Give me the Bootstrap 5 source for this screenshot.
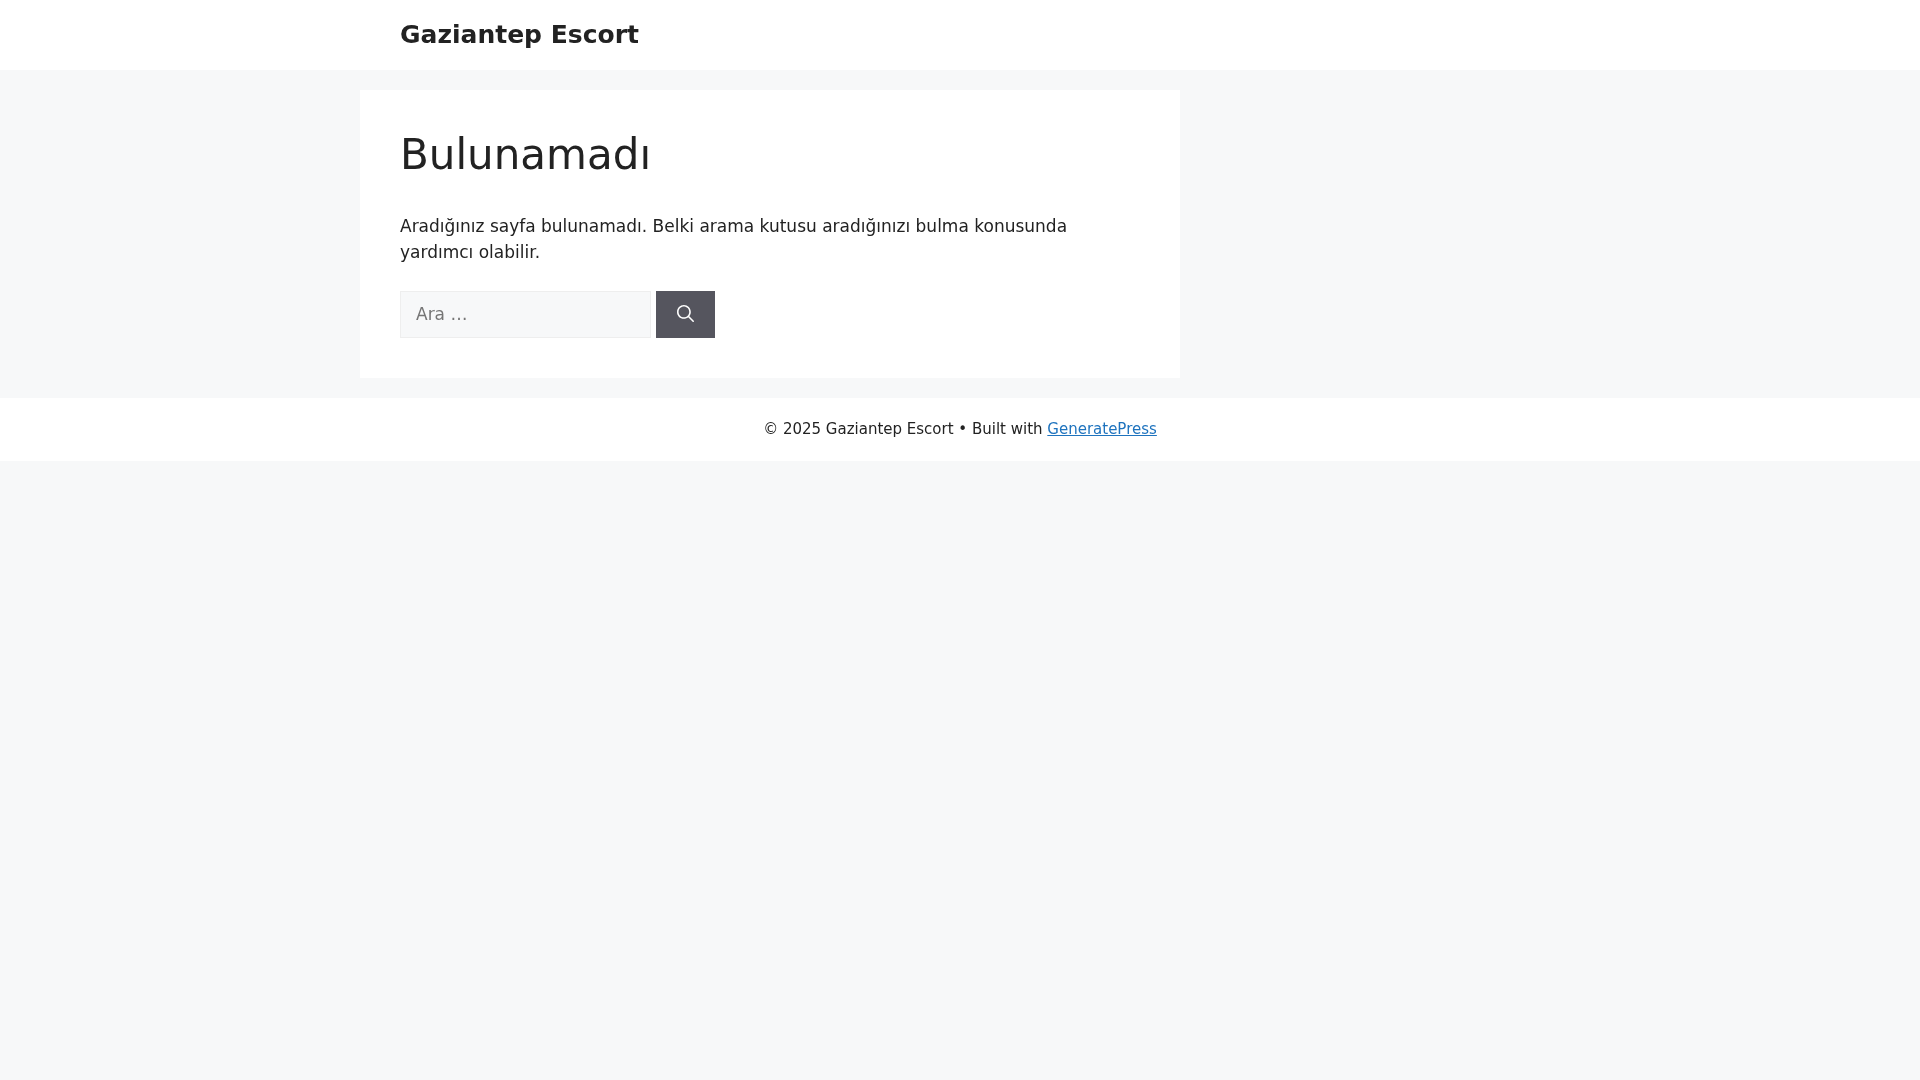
<!DOCTYPE html>
<html lang="tr">
<head>
<meta charset="utf-8">
<title>Bulunamadı – Gaziantep Escort</title>
<link href="https://cdn.jsdelivr.net/npm/bootstrap@5.3.0/dist/css/bootstrap.min.css" rel="stylesheet">
<style>
body { background: #f7f8f9; color: #222; font-family: "DejaVu Sans", sans-serif; font-size: 17px; line-height: 1.5; min-height: 1080px; will-change: transform; }
.wrap-site { width: 1200px; }
.head-bar { height: 70px; }
.site-name { color: #222; font-size: 25px; font-weight: 700; line-height: 1.5; text-decoration: none; padding-left: 40px; }
.page-row { width: 1200px; padding-top: 20px; padding-bottom: 20px; }
.main-panel { width: 820px; padding: 40px; background: #fff; }
.main-title { font-size: 42px; font-weight: 400; line-height: 1.2; margin-bottom: 34px; color: #222; }
.main-text { margin-bottom: 25.5px; line-height: 1.5; }
.find-input { width: 251px; height: 47px; background: #f7f8f9; border: 1px solid #eee; border-radius: 0; padding: 10px 15px; font-size: 17px; color: #666; line-height: 1.5; }
.find-input::placeholder { color: #757575; opacity: 1; }
.find-input:focus { background: #f7f8f9; border-color: #eee; box-shadow: none; }
.find-btn { width: 59px; height: 47px; background: #55555e; color: #fff; border: 0; border-radius: 0; padding: 0 0 2px; margin-left: 5px; }
.find-btn:hover { background: #3f4047; color: #fff; }
.foot-bar { height: 63px; font-size: 15px; color: #222; }
.foot-bar a { color: #1e73be; }
</style>
</head>
<body>
<header class="bg-white head-bar d-flex align-items-center">
  <div class="wrap-site mx-auto"><a class="site-name" href="#">Gaziantep Escort</a></div>
</header>
<div class="page-row mx-auto">
  <main class="main-panel">
    <h1 class="main-title">Bulunamadı</h1>
    <p class="main-text">Aradığınız sayfa bulunamadı. Belki arama kutusu aradığınızı bulma konusunda yardımcı olabilir.</p>
    <form class="d-flex" onsubmit="return false">
      <input class="form-control find-input" type="search" placeholder="Ara …" aria-label="Ara">
      <button class="btn find-btn d-flex align-items-center justify-content-center" type="submit" aria-label="Ara">
        <svg width="17" height="17" viewBox="0 0 512 512" fill="#fff"><path fill-rule="evenodd" clip-rule="evenodd" d="M208 48c-88.366 0-160 71.634-160 160s71.634 160 160 160 160-71.634 160-160S296.366 48 208 48zM0 208C0 93.125 93.125 0 208 0s208 93.125 208 208c0 48.741-16.765 93.566-44.843 129.024l133.826 134.018c9.366 9.379 9.355 24.575-.025 33.941-9.379 9.366-24.575 9.355-33.941-.025L337.238 370.987C301.747 399.167 256.839 416 208 416 93.125 416 0 322.875 0 208z"/></svg>
      </button>
    </form>
  </main>
</div>
<footer class="bg-white foot-bar d-flex align-items-center justify-content-center">
  <span>© 2025 Gaziantep Escort • Built with <a href="#">GeneratePress</a></span>
</footer>
<script src="https://cdn.jsdelivr.net/npm/bootstrap@5.3.0/dist/js/bootstrap.bundle.min.js"></script>
</body>
</html>
